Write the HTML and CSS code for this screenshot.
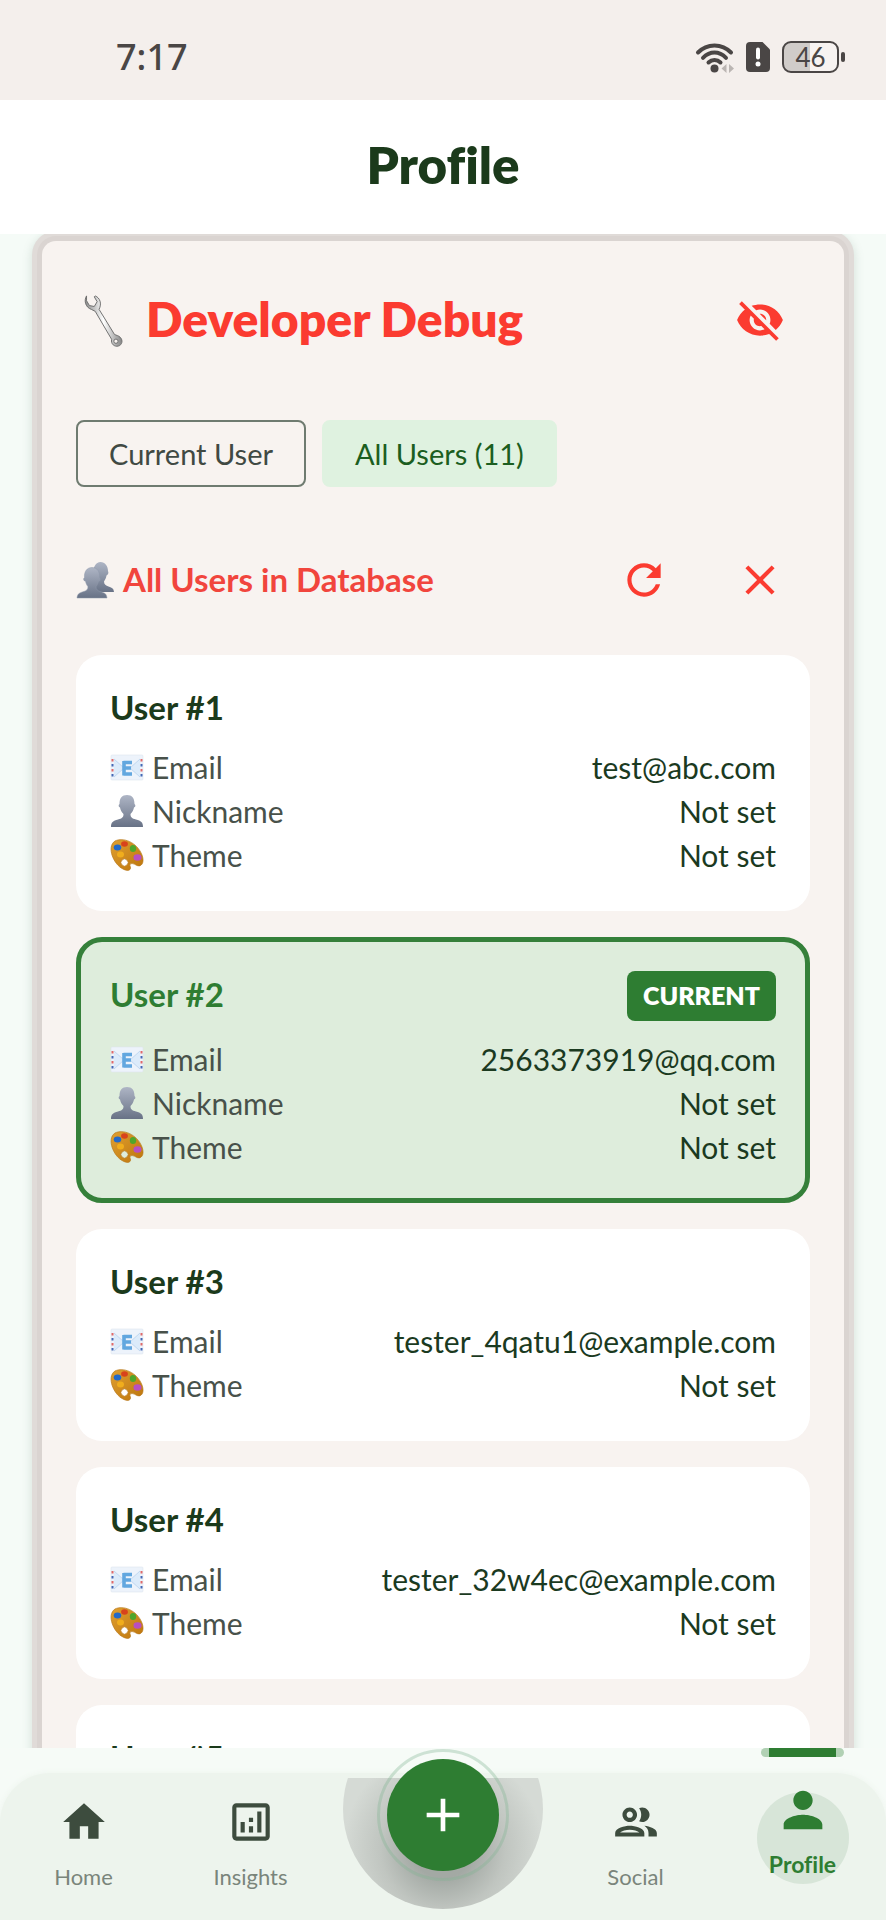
FILE: index.html
```html
<!DOCTYPE html>
<html lang="en">
<head>
<meta charset="utf-8">
<meta name="viewport" content="width=device-width, initial-scale=1">
<title>Profile</title>
<link rel="stylesheet" href="styles.css">
</head>
<body>
<svg class="defs" aria-hidden="true">
  <defs>
    <linearGradient id="slate" x1="0" y1="0" x2="0" y2="1"><stop offset="0" stop-color="#aeb5c5"/><stop offset="1" stop-color="#687286"/></linearGradient>
    <linearGradient id="gold" x1="0" y1="0" x2="1" y2="1"><stop offset="0" stop-color="#e0a030"/><stop offset="1" stop-color="#bd750d"/></linearGradient>
    <linearGradient id="steel" x1="0" y1="0" x2="1" y2="0"><stop offset="0" stop-color="#8b8b8b"/><stop offset=".5" stop-color="#ffffff"/><stop offset="1" stop-color="#858585"/></linearGradient>
    <symbol id="mail" viewBox="0 0 34 34">
      <rect x="1" y="5" width="32" height="25" rx="1" fill="#edf3fb" stroke="#dde5ef" stroke-width=".6"/>
      <path d="M4 9l10 9L4 27M30 9l-10 9 10 9" fill="#dcebfa" stroke="#b7d2ee" stroke-width=".8"/>
      <path d="M2.500 9v19M31.500 9v19" stroke="#df6a6a" stroke-width="2" stroke-dasharray="2.500 7.500"/>
      <path d="M2.500 14v14M31.500 14v14" stroke="#4368b5" stroke-width="2" stroke-dasharray="2.500 7.500"/>
      <path d="M13.500 12.500H22M13.500 18H21M13.500 24H22M14 11v14.500" fill="none" stroke="#62a7df" stroke-width="3.600"/>
    </symbol>
    <symbol id="person" viewBox="0 0 34 34">
      <path d="M1 33c0-5 2-6 7-7.500 4-1.200 5.500-2 5.500-5.500-2-2-3-4-3.500-6.500C8 12.500 8.500 11 9.500 10 9.500 4 12 1 17 1s7.500 3 7.500 9c1 1 1.500 2.500-.5 3.500-.5 2.500-1.500 4.500-3.500 6.500 0 3.500 1.500 4.300 5.500 5.500 5 1.500 7 2.500 7 7.500z" fill="url(#slate)"/>
    </symbol>
    <symbol id="people" viewBox="0 0 38 38">
      <path d="M13 31c0-3 3-4.500 6-6l-2-10c-.5-9 3-14 7.500-14S32 5 32 10c1 2 0 4-1.500 4.500-.5 3-1.500 4.500-2.500 6 0 3 2 4 4.500 5 4 1.300 5 2 5.500 5.500z" fill="url(#slate)"/>
      <path d="M1 37c.5-4 2-5 6-6.200 3.500-1 5-2.300 5-5-1.500-2-2-3.500-2.500-5.500C7.500 20 7 17.500 8.500 16.500 8 10.500 11 6.500 16 6.500s8 4 7.500 10c1.500 1.500 1 3.500-1 4-.5 2-1.500 3.500-2.500 5.300 0 2.700 1.500 4 5 5 4 1.200 5.500 2.200 6 6.200z" fill="url(#slate)" stroke="#8f98aa" stroke-width=".5"/>
    </symbol>
    <symbol id="palette" viewBox="0 0 34 34">
      <path fill-rule="evenodd" d="M5 3C13-1 27 4 32 17c3 8-1 13-6 10-3-2-7-2-6 1 2 4-2 6-7 3C4 27-4 9 5 3zM12 22a3.500 3.500 0 1 0 5 5 3.500 3.500 0 0 0-5-5z" fill="url(#gold)" stroke="#b8771a" stroke-width=".7"/>
      <ellipse cx="7.500" cy="9.500" rx="3.800" ry="2.900" fill="#2369c8"/><ellipse cx="14.500" cy="6" rx="3.400" ry="2.700" fill="#d8431c"/><ellipse cx="23" cy="10.500" rx="3.200" ry="3.600" fill="#4fa62b"/><ellipse cx="27.500" cy="19.500" rx="4" ry="3.300" fill="#b84fc0"/><ellipse cx="10.500" cy="16.500" rx="3.500" ry="3" fill="#f0ad1d"/>
    </symbol>
  </defs>
</svg>

<div class="screen">
  <div class="status">
    <span class="clock">7:17</span>
    <div class="status-icons">
      <svg width="39" height="31" viewBox="0 0 39 31" fill="none" stroke="#4a4645" stroke-width="4" stroke-linecap="round">
        <path d="M3 10.500C12 1 27 1 36 10.500M8 15.800c7-7 16-7 23 0M13.500 20.500c3.500-3.500 8.500-3.500 12 0"/>
        <circle cx="19.500" cy="26.500" r="4" fill="#4a4645" stroke="none"/>
        <path d="M31.500 22v9l-5-4.500zM34 22v9l5-4.500z" fill="#bbb6b3" stroke="none"/>
      </svg>
      <svg width="24" height="30" viewBox="0 0 24 30">
        <path d="M4 0h12.500L24 7.500V26a4 4 0 0 1-4 4H4a4 4 0 0 1-4-4V4a4 4 0 0 1 4-4z" fill="#4a4645"/>
        <path d="M12 7.500v8" stroke="#fff" stroke-width="4" stroke-linecap="round"/><circle cx="12" cy="22" r="2.500" fill="#fff"/>
      </svg>
      <div class="battery"><span>46</span></div>
    </div>
  </div>

  <header class="topbar"><h1>Profile</h1></header>

  <main class="content">
    <section class="debug">
      <div class="debug-head">
        <svg class="wrench" viewBox="0 0 50 56">
          <path d="M10 3C7 8 9 15 15 17l4 2 17 29c-1 5 3 8 7 7 4-1 5-6 2-9-2-2-4-2-6-3L23 17c3-6 1-12-4-14l-1 1 3 5-3 5-5-1-3-5z" fill="url(#steel)" stroke="#6d6d6d" stroke-width="1"/>
          <circle cx="40.500" cy="50" r="2.200" fill="#f9f3f0" stroke="#6d6d6d" stroke-width="1"/>
        </svg>
        <h2>Developer Debug</h2>
        <button class="icon-button" type="button" aria-label="Hide debug panel">
          <svg viewBox="0 0 24 24"><path d="M12 7c2.760 0 5 2.240 5 5 0 .65-.13 1.260-.36 1.830l2.920 2.920c1.510-1.260 2.700-2.890 3.430-4.750-1.730-4.390-6-7.500-11-7.500-1.400 0-2.740.25-3.980.7l2.160 2.160C10.740 7.130 11.350 7 12 7zM2 4.270l2.280 2.280.46.46C3.080 8.300 1.780 10.020 1 12c1.730 4.390 6 7.500 11 7.500 1.550 0 3.030-.3 4.380-.84l.42.42L19.730 22 21 20.730 3.270 3 2 4.270zM7.530 9.800l1.550 1.550c-.05.21-.08.43-.08.65 0 1.660 1.340 3 3 3 .22 0 .44-.03.65-.08l1.550 1.550c-.67.33-1.410.53-2.200.53-2.760 0-5-2.240-5-5 0-.79.2-1.530.53-2.200zm4.310-.78l3.150 3.150.02-.16c0-1.660-1.340-3-3-3l-.17.01z"/></svg>
        </button>
      </div>

      <div class="tabs">
        <button class="tab" type="button">Current User</button>
        <button class="tab selected" type="button">All Users (11)</button>
      </div>

      <div class="list-head">
        <svg class="emoji-large"><use href="#people"/></svg>
        <h3>All Users in Database</h3>
        <div class="actions">
          <button class="icon-button" type="button" aria-label="Refresh"><svg viewBox="0 0 24 24"><path d="M17.650 6.350C16.200 4.900 14.210 4 12 4c-4.420 0-7.990 3.580-7.990 8s3.570 8 7.990 8c3.730 0 6.840-2.550 7.730-6h-2.080c-.82 2.330-3.040 4-5.650 4-3.310 0-6-2.690-6-6s2.690-6 6-6c1.660 0 3.140.69 4.220 1.780L13 11h7V4l-2.350 2.350z"/></svg></button>
          <button class="icon-button" type="button" aria-label="Close"><svg viewBox="0 0 24 24"><path d="M19 6.410L17.590 5 12 10.590 6.410 5 5 6.410 10.590 12 5 17.590 6.410 19 12 13.410 17.590 19 19 17.590 13.410 12z"/></svg></button>
        </div>
      </div>

      <div class="users">
        <article class="user">
          <div class="user-head"><h4>User #1</h4></div>
          <dl>
            <div class="row"><dt><svg class="emoji"><use href="#mail"/></svg>Email</dt><dd>test@abc.com</dd></div>
            <div class="row"><dt><svg class="emoji"><use href="#person"/></svg>Nickname</dt><dd>Not set</dd></div>
            <div class="row"><dt><svg class="emoji"><use href="#palette"/></svg>Theme</dt><dd>Not set</dd></div>
          </dl>
        </article>
        <article class="user current">
          <div class="user-head"><h4>User #2</h4><span class="badge">CURRENT</span></div>
          <dl>
            <div class="row"><dt><svg class="emoji"><use href="#mail"/></svg>Email</dt><dd>2563373919@qq.com</dd></div>
            <div class="row"><dt><svg class="emoji"><use href="#person"/></svg>Nickname</dt><dd>Not set</dd></div>
            <div class="row"><dt><svg class="emoji"><use href="#palette"/></svg>Theme</dt><dd>Not set</dd></div>
          </dl>
        </article>
        <article class="user">
          <div class="user-head"><h4>User #3</h4></div>
          <dl>
            <div class="row"><dt><svg class="emoji"><use href="#mail"/></svg>Email</dt><dd>tester_4qatu1@example.com</dd></div>
            <div class="row"><dt><svg class="emoji"><use href="#palette"/></svg>Theme</dt><dd>Not set</dd></div>
          </dl>
        </article>
        <article class="user">
          <div class="user-head"><h4>User #4</h4></div>
          <dl>
            <div class="row"><dt><svg class="emoji"><use href="#mail"/></svg>Email</dt><dd>tester_32w4ec@example.com</dd></div>
            <div class="row"><dt><svg class="emoji"><use href="#palette"/></svg>Theme</dt><dd>Not set</dd></div>
          </dl>
        </article>
        <article class="user">
          <div class="user-head"><h4>User #5</h4></div>
        </article>
      </div>
    </section>
  </main>

  <nav class="nav" aria-label="Main">
    <div class="nav-bar">
      <a class="nav-item" href="#home"><svg viewBox="0 0 24 24"><path d="M10 20v-6h4v6h5v-8h3L12 3 2 12h3v8z"/></svg>Home</a>
      <a class="nav-item" href="#insights"><svg viewBox="0 0 24 24"><path d="M19 3H5c-1.100 0-2 .9-2 2v14c0 1.100.9 2 2 2h14c1.100 0 2-.9 2-2V5c0-1.100-.9-2-2-2zm0 16H5V5h14v14zM7 12h2v5H7zM15 7h2v10h-2zM11 14h2v3h-2zM11 10h2v2h-2z"/></svg>Insights</a>
      <div class="nav-gap">
        <div class="notch"></div>
        <button class="fab" type="button" aria-label="Add"><svg viewBox="0 0 24 24"><path d="M19 13h-6v6h-2v-6H5v-2h6V5h2v6h6v2z"/></svg></button>
      </div>
      <a class="nav-item" href="#social"><svg viewBox="0 0 24 24"><path d="M9 13.750c-2.340 0-7 1.170-7 3.500V19h14v-1.750c0-2.330-4.660-3.500-7-3.500zM4.340 17c.84-.58 2.870-1.250 4.660-1.250s3.820.67 4.660 1.250H4.340zM9 12c1.930 0 3.500-1.570 3.500-3.500S10.930 5 9 5 5.500 6.570 5.500 8.500 7.070 12 9 12zm0-5c.83 0 1.500.67 1.500 1.500S9.830 10 9 10s-1.500-.67-1.500-1.500S8.170 7 9 7zm7.040 6.810c1.160.84 1.960 1.960 1.960 3.440V19h4v-1.750c0-2.020-3.500-3.170-5.960-3.440zM15 12c1.930 0 3.500-1.570 3.500-3.500S16.930 5 15 5c-.54 0-1.040.13-1.500.35.63.89 1 1.980 1 3.150s-.37 2.260-1 3.150c.46.22.96.35 1.500.35z"/></svg>Social</a>
      <a class="nav-item active" href="#profile" aria-current="page"><svg viewBox="0 0 24 24"><path d="M12 12c2.210 0 4-1.790 4-4s-1.790-4-4-4-4 1.790-4 4 1.790 4 4 4zm0 2c-2.670 0-8 1.340-8 4v2h16v-2c0-2.660-5.330-4-8-4z"/></svg>Profile</a>
    </div>
  </nav>
</div>
</body>
</html>
```

FILE: styles.css
```css
*, *::before, *::after { box-sizing: border-box; }

body {
  margin: 0;
  font-family: Lato, "Open Sans", sans-serif;
  font-variant-ligatures: none;
  background: #f5fbf7;
  color: #1b3a1f;
}

h1, h2, h3, h4, dl, dd { margin: 0; }
button { font: inherit; border: 0; cursor: pointer; }

.defs { position: absolute; width: 0; height: 0; }

.screen { display: flex; flex-direction: column; height: 100vh; }

/* Status bar */
.status {
  display: flex;
  justify-content: space-between;
  align-items: center;
  padding: 26px 40px 12px 116px;
  height: 100px;
  flex: none;
  background: #f4efec;
  color: #4a4645;
}
.clock { font: 500 36px/40px "Noto Sans", sans-serif; }
.status-icons { display: flex; align-items: center; gap: 12px; }
.battery {
  position: relative;
  width: 57px;
  height: 32px;
  margin-right: 7px;
  border: 2px solid #4a4645;
  border-radius: 9px;
  background: linear-gradient(90deg, #d0ccc9 50%, #f7f3f1 50%);
  font: 26px/28px Lato, sans-serif;
  text-align: center;
}
.battery::after {
  content: "";
  position: absolute;
  right: -8px;
  top: 9px;
  width: 4px;
  height: 10px;
  border-radius: 2px;
  background: #4a4645;
}

/* Title bar */
.topbar {
  display: flex;
  align-items: center;
  justify-content: center;
  height: 134px;
  padding-bottom: 4px;
  flex: none;
  background: #fff;
}
.topbar h1 { font-size: 51px; line-height: 60px; font-weight: 800; color: #1b3a1b; }

/* Debug panel */
.content {
  flex: 1;
  min-height: 0;
  overflow: hidden;
  padding: 7px 42px 0;
}
.debug {
  padding: 29px 34px;
  border-radius: 14px;
  background: #f8f3f0;
  box-shadow: 0 0 0 5px #dad4d1, 0 0 0 10px #e0dbd8, 0 3px 10px 11px rgba(90, 120, 105, .18);
}
.debug-head, .list-head { display: flex; align-items: center; color: #fb3b30; }
.debug-head { gap: 20px; }
.wrench { width: 50px; height: 54px; }
.debug-head h2 { flex: 1; padding-bottom: 2px; font-size: 48px; line-height: 56px; font-weight: 800; }
.icon-button {
  display: grid;
  place-items: center;
  width: 100px;
  height: 100px;
  padding: 0;
  background: none;
  color: #fb3b30;
}
.icon-button svg { width: 50px; height: 50px; fill: currentColor; }

.tabs { display: flex; gap: 16px; margin: 50px 0 43px; }
.tab {
  height: 67px;
  padding: 0 31px;
  border: 2px solid #6f7b70;
  border-radius: 8px;
  background: transparent;
  color: #404943;
  font-size: 29px;
}
.tab.selected { border-color: #dff2e0; background: #dff2e0; color: #1b5e20; }

.emoji-large { width: 38px; height: 38px; margin-right: 9px; }
.list-head h3 { padding-bottom: 2px; font-size: 33px; line-height: 40px; font-weight: 700; color: #f1453d; }
.actions { display: flex; gap: 16px; margin-left: auto; }

/* User cards */
.users { display: grid; gap: 26px; margin-top: 25px; }
.user { padding: 34px; border-radius: 26px; background: #fff; }
.user-head {
  display: flex;
  align-items: center;
  justify-content: space-between;
  min-height: 40px;
  margin-bottom: 16px;
}
.user h4 { padding-bottom: 4px; font-size: 33px; line-height: 36px; font-weight: 700; color: #1b3a1b; }
.row { display: flex; justify-content: space-between; font-size: 30px; line-height: 44px; }
.row dt { display: flex; align-items: center; gap: 8px; color: #48514a; }
.emoji { width: 34px; height: 34px; }

.current { padding: 29px; border: 5px solid #35803a; background: #deeddc; }
.user.current h4 { color: #2e7d32; }
.badge {
  padding: 8px 16px 10px;
  border-radius: 8px;
  background: #2e7d32;
  color: #fff;
  font-size: 25px;
  line-height: 32px;
  font-weight: 800;
}

/* Bottom navigation */
.nav { flex: none; position: relative; padding-top: 25px; background: #f6fbf7; }
.nav-bar {
  display: grid;
  grid-template-columns: 1fr 1fr 218px 1fr 1fr;
  height: 147px;
  border-radius: 50px 50px 0 0;
  background: #edf4ed;
  box-shadow: 0 0 6px #edf4ed;
}
.nav-item {
  position: relative;
  display: flex;
  flex-direction: column;
  align-items: center;
  gap: 16px;
  padding-top: 24px;
  color: #7a857b;
  font-size: 22px;
  line-height: 28px;
  text-decoration: none;
}
.nav-item svg { width: 50px; height: 50px; fill: #3d4c3e; }
.nav-item.active { z-index: 0; gap: 11px; padding-top: 8px; color: #2e7d32; font-size: 23px; font-weight: 700; }
.nav-item.active svg { width: 58px; height: 58px; fill: #2e7d32; }
.nav-item.active::before {
  content: "";
  position: absolute;
  z-index: -1;
  top: 19px;
  width: 92px;
  height: 92px;
  border-radius: 50%;
  background: #d7e5d8;
}
.nav-item.active::after {
  content: "";
  position: absolute;
  top: -25px;
  width: 83px;
  height: 9px;
  border-radius: 5px;
  background: linear-gradient(#2e7d32, #2e7d32) center / 67px 9px no-repeat #b1d1b4;
}

.nav-gap { position: relative; display: flex; justify-content: center; }
.notch {
  position: absolute;
  top: 5px;
  width: 200px;
  height: 131px;
  clip-path: circle(100px at 50% 31px);
  background: radial-gradient(circle 100px at 50% 70px, #a3a9a4 30%, #c0c5c0 62%, #d5dad5 100%);
}
.fab {
  position: absolute;
  top: -14px;
  display: grid;
  place-items: center;
  width: 112px;
  height: 112px;
  padding: 0;
  border-radius: 50%;
  background: #2e7d32;
}
.fab::before {
  content: "";
  position: absolute;
  inset: -10px;
  border: 3px solid rgba(130, 180, 145, .35);
  border-radius: 50%;
}
.fab svg { width: 56px; height: 56px; fill: #fff; }
```
